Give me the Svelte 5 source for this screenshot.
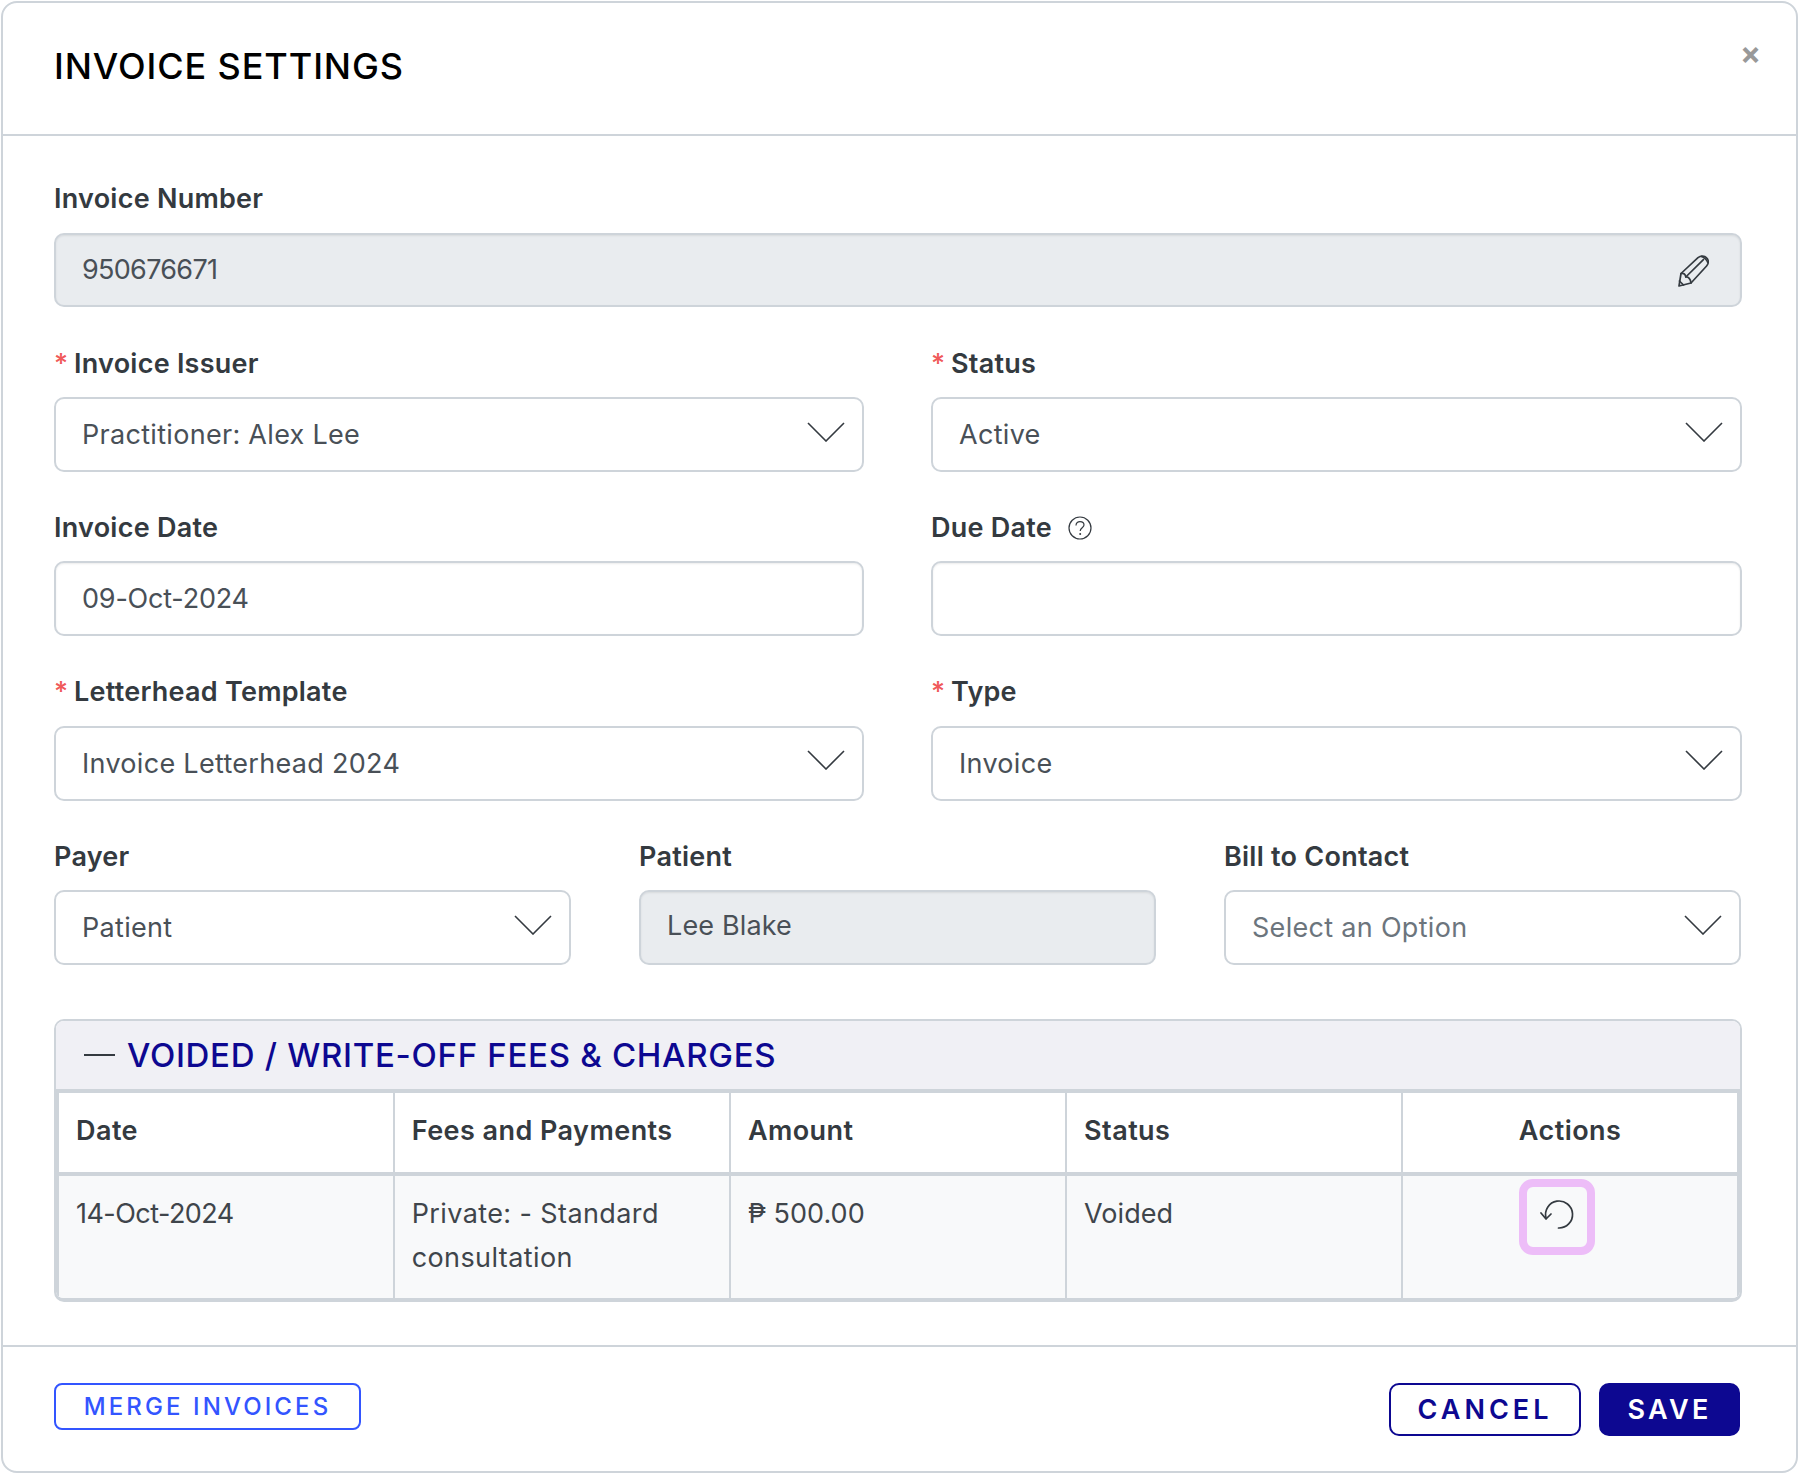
<script>
  const columns = ['Date', 'Fees and Payments', 'Amount', 'Status'];
</script>

{#snippet chev()}
  <svg class="chev" viewBox="0 0 38 20" width="38" height="20" aria-hidden="true"><path d="M1 1 L19 19 L37 1" fill="none" stroke="#343a40" stroke-width="1.6"/></svg>
{/snippet}

{#snippet select(text, placeholder = false)}
  <div class="control select" class:placeholder><span>{text}</span>{@render chev()}</div>
{/snippet}

<div class="modal">
  <header class="head">
    <h1>INVOICE SETTINGS</h1>
    <span class="close">×</span>
  </header>

  <main class="body">
    <div class="field">
      <div class="label">Invoice Number</div>
      <div class="control disabled first">
        <span class="digits">950676671</span>
        <svg class="pencil" viewBox="0 0 31 32" width="31" height="32" aria-hidden="true">
          <g fill="none" stroke="#343a40" stroke-width="1.7" stroke-linejoin="round" stroke-linecap="round">
            <path d="M1 31 L3 18.5 L20 2.6 C22.6 0.6 26.5 0.6 28.6 2.8 C30.8 5 30.8 8.5 28.6 11 L13 28 Z"/>
            <path d="M3 18.5 C6 18 7.4 19 7.8 22 C10.4 21.6 12.6 24 13 28"/>
            <path d="M7.8 22 L25.4 4.6 M23.4 1.4 C26 2 29 5 29.8 7.6"/>
            <path d="M1.4 26 L5.6 30"/>
          </g>
        </svg>
      </div>
    </div>

    <div class="two">
      <div class="field">
        <div class="label"><i>*</i>Invoice Issuer</div>
        {@render select('Practitioner: Alex Lee')}
      </div>
      <div class="field">
        <div class="label"><i>*</i>Status</div>
        {@render select('Active')}
      </div>
      <div class="field">
        <div class="label">Invoice Date</div>
        <div class="control"><span class="date">09-Oct-2024</span></div>
      </div>
      <div class="field">
        <div class="label">Due Date
          <svg class="help" viewBox="0 0 24 24" width="24" height="24" aria-hidden="true">
            <circle cx="12" cy="12" r="11" fill="none" stroke="#343a40" stroke-width="1.2"/>
            <path d="M8 9.4 C8 6.8 10 5.6 12 5.6 C14.4 5.6 16 7 16 9 C16 11.6 12.2 12 12.2 15" fill="none" stroke="#343a40" stroke-width="1.2"/>
            <circle cx="12.2" cy="18" r="1" fill="#343a40"/>
          </svg>
        </div>
        <div class="control"></div>
      </div>
      <div class="field">
        <div class="label"><i>*</i>Letterhead Template</div>
        {@render select('Invoice Letterhead 2024')}
      </div>
      <div class="field">
        <div class="label"><i>*</i>Type</div>
        {@render select('Invoice')}
      </div>
    </div>

    <div class="three">
      <div class="field">
        <div class="label">Payer</div>
        {@render select('Patient')}
      </div>
      <div class="field">
        <div class="label">Patient</div>
        <div class="control disabled patient"><span>Lee Blake</span></div>
      </div>
      <div class="field">
        <div class="label">Bill to Contact</div>
        {@render select('Select an Option', true)}
      </div>
    </div>

    <section class="panel">
      <div class="panel-head"><span class="dash"></span><h2>VOIDED / WRITE-OFF FEES &amp; CHARGES</h2></div>
      <table>
        <thead>
          <tr>
            {#each columns as c}<th>{c}</th>{/each}
            <th class="act">Actions</th>
          </tr>
        </thead>
        <tbody>
          <tr>
            <td class="tdate">14-Oct-2024</td>
            <td>Private: - Standard consultation</td>
            <td class="amount">₱ 500.00</td>
            <td class="amount">Voided</td>
            <td class="act-cell">
              <span class="focus">
                <svg viewBox="0 0 34 32" width="34" height="32" aria-hidden="true">
                  <g fill="none" stroke="#343a40" stroke-width="1.7" stroke-linecap="round" stroke-linejoin="round">
                    <path d="M6 19 A13.5 13.5 0 1 1 18.5 29"/>
                    <path d="M1 14 L6 20 L11 15"/>
                  </g>
                </svg>
              </span>
            </td>
          </tr>
        </tbody>
      </table>
    </section>
  </main>

  <footer class="foot">
    <button class="merge">MERGE INVOICES</button>
    <div class="right">
      <button class="cancel">CANCEL</button>
      <button class="save">SAVE</button>
    </div>
  </footer>
</div>

<style>
  :global(body) { margin: 0; background: #fff; }
  .modal {
    width: 1797px;
    height: 1472px;
    margin: 1px;
    box-sizing: border-box;
    border: 2px solid #ced4da;
    border-radius: 16px;
    background: #fff;
    font-family: Inter, "Noto Sans", sans-serif;
    color: #343a40;
    display: flex;
    flex-direction: column;
    overflow: hidden;
  }
  .head {
    height: 133px;
    box-sizing: border-box;
    border-bottom: 2px solid #ced4da;
    padding: 0 35px 0 51px;
    display: flex;
    justify-content: space-between;
    flex: none;
  }
  h1 {
    margin: 41px 0 0;
    font-size: 36px;
    line-height: 44px;
    font-weight: 500;
    color: #000;
    letter-spacing: 0.9px;
  }
  .close {
    margin-top: 34px;
    font-size: 31px;
    line-height: 31px;
    font-weight: 700;
    color: #999;
  }
  .body {
    flex: 1;
    padding: 47px 54px 0 51px;
  }
  .label {
    font-size: 27px;
    line-height: 30px;
    font-weight: 600;
    letter-spacing: 0.25px;
    padding-top: 1px;
    margin-bottom: 18.5px;
    display: flex;
    align-items: center;
    white-space: pre;
  }
  .label i {
    font-style: normal;
    color: #f05a5a;
    width: 20px;
    font-weight: 500;
  }
  .help { margin-left: 9px; }
  .control {
    height: 75px;
    box-sizing: border-box;
    border: 2px solid #ced4da;
    border-radius: 10px;
    padding: 0 26px;
    display: flex;
    align-items: center;
    justify-content: space-between;
    font-size: 27px;
    letter-spacing: 0.3px;
    color: #495057;
    background: #fff;
    box-shadow: inset 0 1px 2px rgba(0, 0, 0, 0.075);
  }
  .first { height: 74px; }
  .digits { letter-spacing: -0.7px; }
  .date { letter-spacing: -0.2px; }
  .disabled { background: #e9ecef; }
  .patient span { margin-top: -4px; letter-spacing: 0.15px; }
  .select { padding-right: 17px; box-shadow: none; }
  .select.placeholder { color: #6c757d; }
  .chev { margin-top: -6px; }
  .pencil { margin-right: 5px; margin-top: 2px; }
  .two {
    margin-top: 41px;
    display: grid;
    grid-template-columns: 810px 811px;
    justify-content: space-between;
    row-gap: 39.8px;
  }
  .three {
    margin-top: 40.3px;
    display: grid;
    grid-template-columns: 517px 517px 517px;
    column-gap: 68px;
  }
  .panel {
    margin-top: 54px;
    border: 2px solid #ced4da;
    border-bottom: 4px solid #ced4da;
    border-radius: 10px;
    overflow: hidden;
  }
  .panel-head {
    height: 68px;
    background: #f0f0f5;
    display: flex;
    align-items: center;
    padding-left: 28px;
    gap: 12px;
  }
  .dash { width: 31px; height: 2px; background: #343a40; }
  h2 {
    margin: 0;
    font-size: 33px;
    font-weight: 500;
    color: #0d0891;
    letter-spacing: 0.7px;
  }
  table {
    width: 100%;
    table-layout: fixed;
    border-collapse: collapse;
    box-sizing: border-box;
  }
  th, td {
    border: 2px solid #ced4da;
    text-align: left;
    vertical-align: top;
    box-sizing: border-box;
    padding: 0 17px;
    font-size: 27px;
  }
  th {
    height: 83px;
    vertical-align: middle;
    font-weight: 600;
    border-top-width: 4px;
    border-bottom-width: 4px;
    letter-spacing: 0.45px;
    padding-bottom: 4px;
  }
  th.act { text-align: center; }
  td {
    background: #f8f9fa;
    height: 123.5px;
    line-height: 43.5px;
    padding-top: 16px;
    color: #3f454b;
    border-bottom: none;
    letter-spacing: 0.4px;
  }
  .tdate { letter-spacing: -0.55px; }
  .amount { letter-spacing: 0.05px; }
  th:first-child, td:first-child { border-left-width: 3px; border-left-color: #ced4da; }
  th:last-child, td:last-child { border-right-width: 3px; }
  .act-cell { padding: 3px 0 0; text-align: center; }
  .focus {
    display: inline-flex;
    width: 76px;
    height: 76px;
    box-sizing: border-box;
    border: 8px solid #edbdf8;
    border-radius: 14px;
    align-items: center;
    justify-content: center;
    margin-right: 26px;
  }
  .focus svg { margin-bottom: 4px; }
  .foot {
    flex: none;
    height: 126px;
    box-sizing: border-box;
    border-top: 2px solid #ced4da;
    padding: 36px 56px 0 51px;
    display: flex;
    justify-content: space-between;
    align-items: flex-start;
  }
  button {
    font-family: inherit;
    font-weight: 500;
    box-sizing: border-box;
    cursor: pointer;
  }
  .merge {
    width: 307px;
    height: 47px;
    border: 2px solid #3355ff;
    border-radius: 8px;
    background: #fff;
    color: #3355ff;
    font-size: 24px;
    letter-spacing: 3.1px;
    padding: 0;
  }
  .right { display: flex; gap: 18px; }
  .cancel, .save {
    height: 53px;
    font-size: 27px;
    font-weight: 600;
    border-radius: 10px;
    padding: 0;
  }
  .cancel {
    width: 192px;
    letter-spacing: 4px;
    border: 2px solid #0d0891;
    background: #fff;
    color: #0d0891;
  }
  .save {
    width: 141px;
    letter-spacing: 3.3px;
    border: 2px solid #0d0891;
    background: #0d0891;
    color: #fff;
  }
</style>
